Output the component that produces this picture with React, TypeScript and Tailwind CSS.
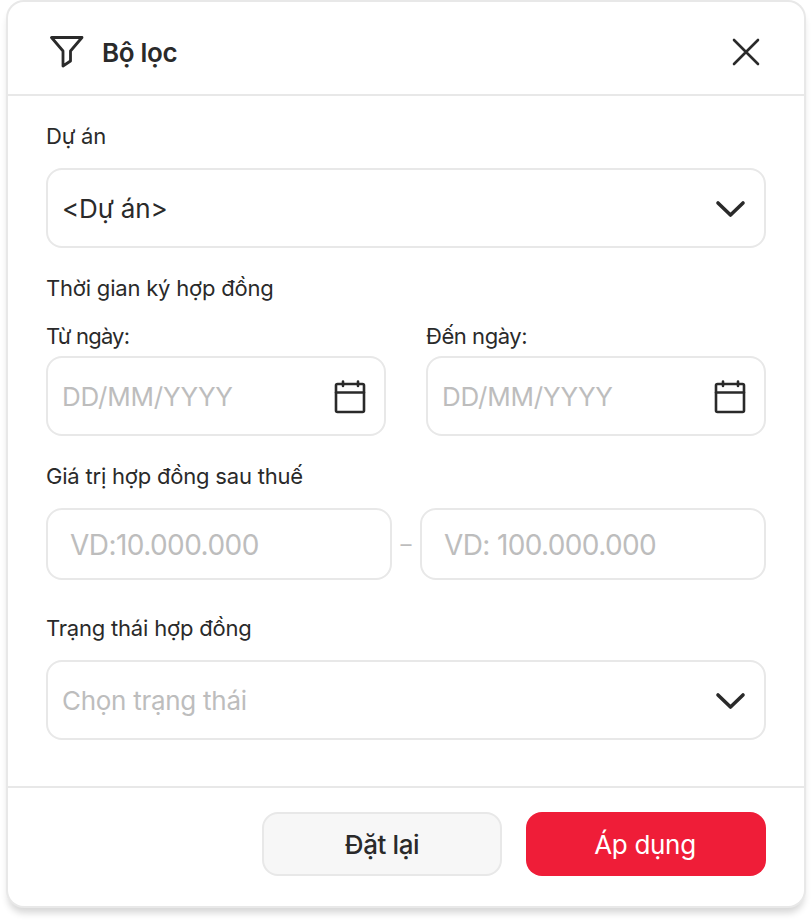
import React from "react";

const font = { fontFamily: '"Inter", sans-serif' };

function Chevron() {
  return (
    <svg width="32" height="32" viewBox="0 0 32 32" fill="none" stroke="#2a2a2a" strokeWidth="3.6" strokeLinecap="round" strokeLinejoin="round">
      <path d="M4 11 L16.5 23 L29 11" />
    </svg>
  );
}

function Calendar() {
  return (
    <svg width="32" height="36" viewBox="0 0 32 36" fill="none" stroke="#2a2a2a" strokeWidth="2.6" strokeLinecap="round" strokeLinejoin="round">
      <rect x="2" y="6" width="28" height="28" rx="1.5" />
      <path d="M2 14.5 H30 M9 3.5 V8 M24 3.5 V8" />
    </svg>
  );
}

function Box({ text, muted, icon, className, size }: { text: string; muted?: boolean; icon?: React.ReactNode; className: string; size: string }) {
  return (
    <div className={`flex items-center justify-between rounded-[16px] border-2 border-[#e8e8e8] bg-white ${className}`}>
      <span className={`${size} leading-[32px] font-[430] pt-[2px] ${muted ? "text-[#bdbdbd]" : "text-[#2a2a2a]"}`}>{text}</span>
      {icon}
    </div>
  );
}

const label = "text-[22px] leading-[30px] tracking-[-0.2px] font-[430]";

export default function App() {
  return (
    <div className="w-[812px] h-[922px] bg-white px-[8px] pt-[2px]" style={font}>
      <div className="h-[904px] w-[796px] rounded-[16px] bg-white shadow-[0_0_0_2px_#e8e8e8,0_7px_7px_rgba(0,0,0,0.16)] flex flex-col">
        <div className="h-[94px] flex items-center justify-between pl-[42px] pr-[44px] pt-[8px] border-b-2 border-[#e8e8e8]">
          <div className="flex items-center gap-[18px]">
            <svg width="34" height="32" viewBox="0 0 34 32" fill="none" stroke="#2a2a2a" strokeWidth="2.8" strokeLinecap="round" strokeLinejoin="round">
              <path d="M1.5 1.5 H32 L20.5 15 V25 L13 30 V15 Z" />
            </svg>
            <span className="text-[26px] font-semibold text-[#2a2a2a] tracking-[-0.35px]">Bộ lọc</span>
          </div>
          <svg width="28" height="28" viewBox="0 0 28 28" fill="none" stroke="#2a2a2a" strokeWidth="2.6" strokeLinecap="round">
            <path d="M2 2 L26 26 M26 2 L2 26" />
          </svg>
        </div>
        <div className="flex-1 px-[38px] flex flex-col text-[#2a2a2a]">
          <div className={`mt-[25px] ${label}`}>Dự án</div>
          <Box text="<Dự án>" size="text-[26px] tracking-[-0.15px]" icon={<Chevron />} className="mt-[17px] h-[80px] pl-[14px] pr-[18px]" />
          <div className={`mt-[25px] ${label}`}>Thời gian ký hợp đồng</div>
          <div className="mt-[18px] grid grid-cols-2 gap-[40px]">
            <div>
              <div className="text-[22px] leading-[30px] tracking-[-0.8px] font-[430]">Từ ngày:</div>
              <Box text="DD/MM/YYYY" muted size="text-[26px] tracking-[-0.2px]" icon={<Calendar />} className="mt-[5px] h-[80px] pl-[14px] pr-[18px]" />
            </div>
            <div>
              <div className="text-[22px] leading-[30px] tracking-[-0.45px] font-[430]">Đến ngày:</div>
              <Box text="DD/MM/YYYY" muted size="text-[26px] tracking-[-0.2px]" icon={<Calendar />} className="mt-[5px] h-[80px] pl-[14px] pr-[18px]" />
            </div>
          </div>
          <div className={`mt-[25px] ${label}`}>Giá trị hợp đồng sau thuế</div>
          <div className="mt-[17px] flex items-center">
            <Box text="VD:10.000.000" muted size="text-[28px] tracking-[-0.55px]" className="w-[346px] h-[72px] pl-[22px]" />
            <span className="w-[28px] text-center text-[22px] text-[#bdbdbd]">–</span>
            <Box text="VD: 100.000.000" muted size="text-[28px] tracking-[-0.63px]" className="w-[346px] h-[72px] pl-[22px]" />
          </div>
          <div className={`mt-[33px] ${label}`}>Trạng thái hợp đồng</div>
          <Box text="Chọn trạng thái" muted size="text-[26px] tracking-[-0.28px]" icon={<Chevron />} className="mt-[17px] h-[80px] pl-[14px] pr-[18px]" />
        </div>
        <div className="h-[120px] border-t-2 border-[#e8e8e8] flex justify-end gap-[24px] pt-[24px] pr-[38px]">
          <div className="w-[240px] h-[64px] rounded-[16px] border-2 border-[#e8e8e8] bg-[#f7f7f7] flex items-center justify-center text-[26px] font-medium tracking-[-0.4px] text-[#2a2a2a]">Đặt lại</div>
          <div className="w-[240px] h-[64px] rounded-[16px] bg-[#ef1d38] flex items-center justify-center pr-[2px] text-[26px] font-[430] tracking-[-0.3px] text-white">Áp dụng</div>
        </div>
      </div>
    </div>
  );
}
